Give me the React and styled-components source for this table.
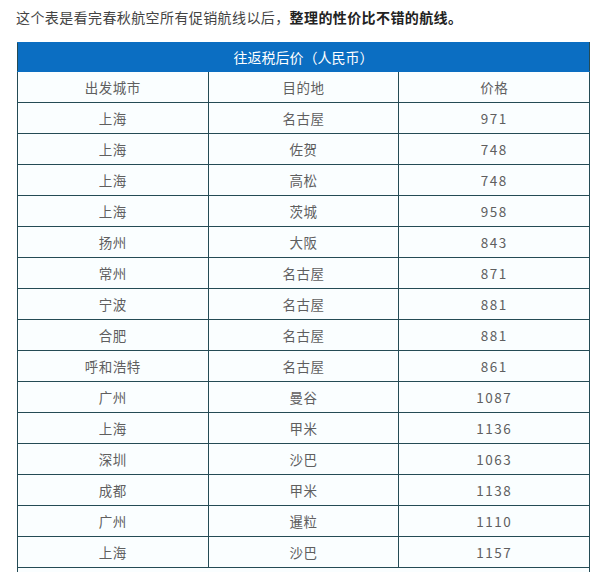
import React from 'react';
import styled, {createGlobalStyle} from 'styled-components';

const GlobalStyle = createGlobalStyle`
  body {
    margin: 0;
    background: #fff;
    font-family: "Noto Sans CJK SC", "Noto Sans", sans-serif;
  }
`;

const rows = [
  ['上海', '名古屋', '971'],
  ['上海', '佐贺', '748'],
  ['上海', '高松', '748'],
  ['上海', '茨城', '958'],
  ['扬州', '大阪', '843'],
  ['常州', '名古屋', '871'],
  ['宁波', '名古屋', '881'],
  ['合肥', '名古屋', '881'],
  ['呼和浩特', '名古屋', '861'],
  ['广州', '曼谷', '1087'],
  ['上海', '甲米', '1136'],
  ['深圳', '沙巴', '1063'],
  ['成都', '甲米', '1138'],
  ['广州', '暹粒', '1110'],
  ['上海', '沙巴', '1157'],
];

const App = () => {
  return (
    <Page>
      <GlobalStyle />
      <Intro>
        这个表是看完春秋航空所有促销航线以后，<strong>整理的性价比不错的航线。</strong>
      </Intro>
      <PriceTable>
        <thead>
          <tr>
            <Title colSpan={3}>往返税后价（人民币）</Title>
          </tr>
        </thead>
        <tbody>
          <tr>
            <Cell>出发城市</Cell>
            <Cell>目的地</Cell>
            <Cell>价格</Cell>
          </tr>
          {rows.map(([from, to, price], i) => (
            <tr key={i}>
              <Cell>{from}</Cell>
              <Cell>{to}</Cell>
              <Cell $num>{price}</Cell>
            </tr>
          ))}
          <tr>
            <Cell colSpan={3}>&nbsp;</Cell>
          </tr>
        </tbody>
      </PriceTable>
    </Page>
  );
};

export default App;

const Page = styled.div`
  padding: 6px 0 0 16px;
`;

const Intro = styled.p`
  margin: 0 0 14px;
  font-size: 14px;
  line-height: 22px;
  letter-spacing: 0.4px;
  color: #444;
  strong {
    color: #222;
    font-weight: 700;
  }
`;

const PriceTable = styled.table`
  width: 573px;
  margin-left: 1px;
  border-collapse: collapse;
  table-layout: fixed;
  font-size: 13.5px;
  color: #5f5f5f;
`;

const Title = styled.th`
  height: 28px;
  padding: 0;
  background: #0b6ec2;
  color: #fff;
  font-weight: 400;
  font-size: 14px;
  border: 1px solid #0b6ec2;
  border-left-color: #244b55;
  border-right-color: #244b55;
`;

const Cell = styled.td`
  height: 30px;
  padding: 0;
  text-align: center;
  border: 1px solid #244b55;
  background: #fafeff;
  letter-spacing: ${p => (p.$num ? '1.5px' : '0.5px')};
`;
